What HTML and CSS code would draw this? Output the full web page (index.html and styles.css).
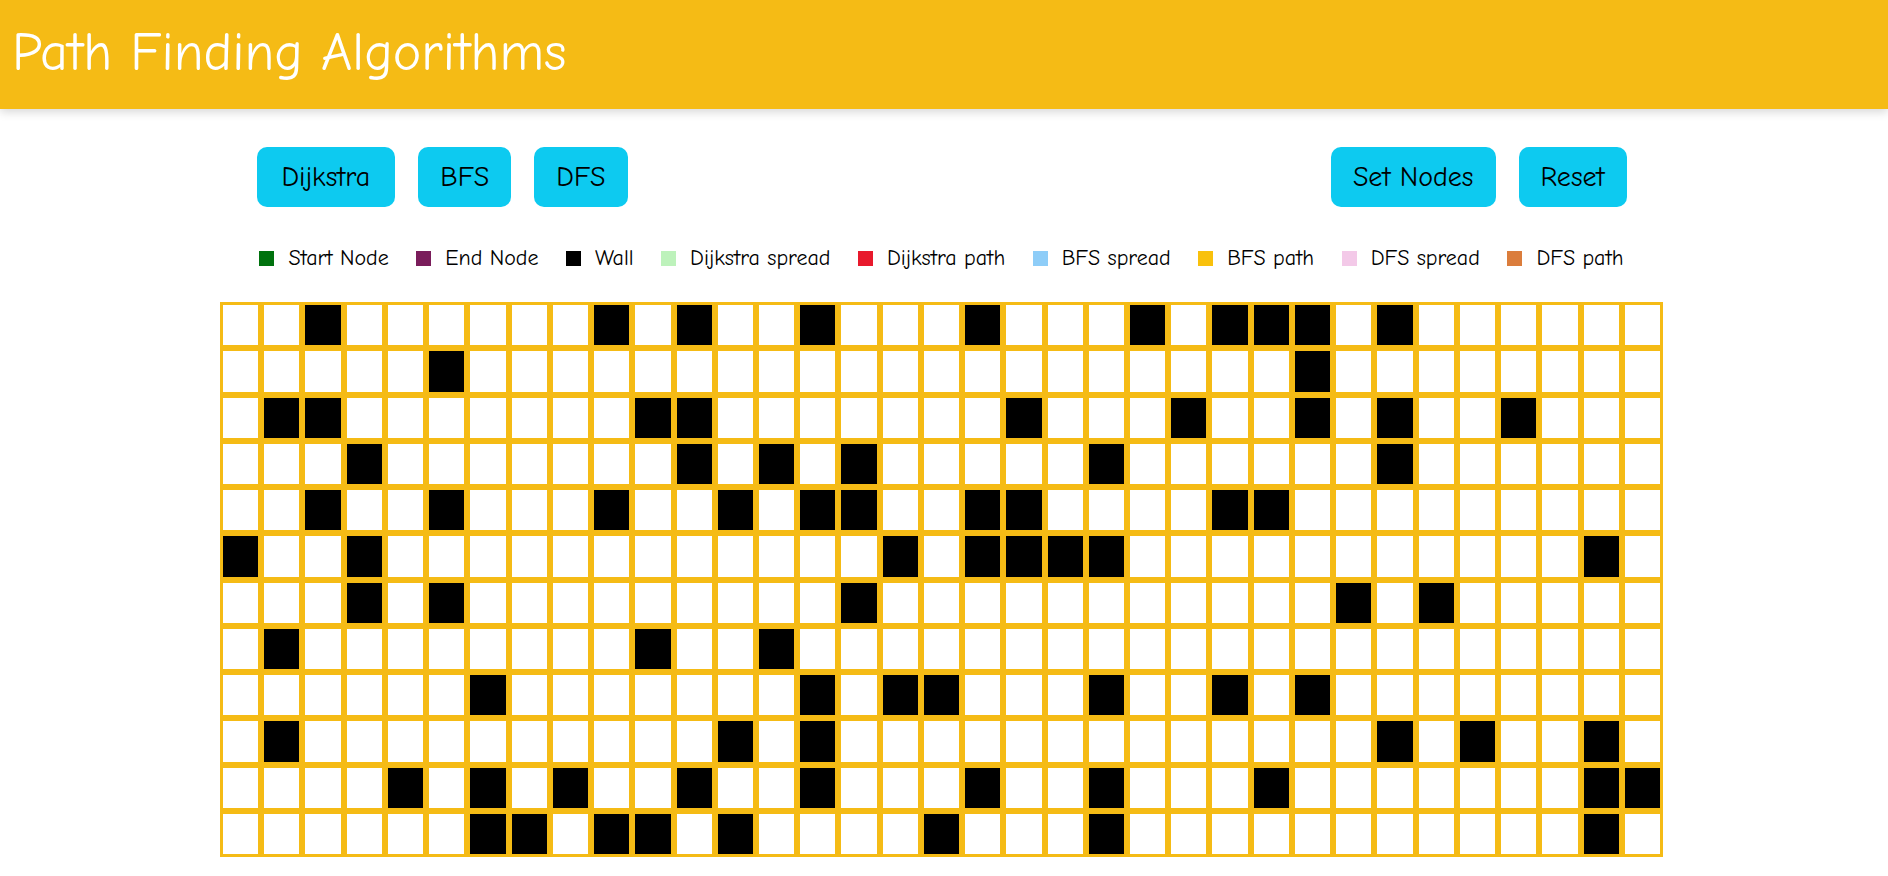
FILE: index.html
```html
<!DOCTYPE html>
<html lang="en">
<head>
<meta charset="utf-8">
<title>Path Finding Algorithms</title>
<link rel="stylesheet" href="styles.css">
</head>
<body>
<header class="topbar">
  <h1 class="title">Path Finding Algorithms</h1>
</header>
<main class="main">
  <div class="toolbar">
    <div class="btn-group">
      <button class="btn btn-wide">Dijkstra</button>
      <button class="btn">BFS</button>
      <button class="btn">DFS</button>
    </div>
    <div class="btn-group">
      <button class="btn">Set Nodes</button>
      <button class="btn">Reset</button>
    </div>
  </div>
  <ul class="legend">
    <li class="legend-item"><span class="swatch start"></span>Start Node</li>
    <li class="legend-item"><span class="swatch end"></span>End Node</li>
    <li class="legend-item"><span class="swatch wallc"></span>Wall</li>
    <li class="legend-item"><span class="swatch dspread"></span>Dijkstra spread</li>
    <li class="legend-item"><span class="swatch dpath"></span>Dijkstra path</li>
    <li class="legend-item"><span class="swatch bspread"></span>BFS spread</li>
    <li class="legend-item"><span class="swatch bpath"></span>BFS path</li>
    <li class="legend-item"><span class="swatch fspread"></span>DFS spread</li>
    <li class="legend-item"><span class="swatch fpath"></span>DFS path</li>
  </ul>
  <div class="grid">
    <div class="node"></div><div class="node"></div><div class="node wall"></div><div class="node"></div><div class="node"></div><div class="node"></div><div class="node"></div><div class="node"></div><div class="node"></div><div class="node wall"></div><div class="node"></div><div class="node wall"></div><div class="node"></div><div class="node"></div><div class="node wall"></div><div class="node"></div><div class="node"></div><div class="node"></div><div class="node wall"></div><div class="node"></div><div class="node"></div><div class="node"></div><div class="node wall"></div><div class="node"></div><div class="node wall"></div><div class="node wall"></div><div class="node wall"></div><div class="node"></div><div class="node wall"></div><div class="node"></div><div class="node"></div><div class="node"></div><div class="node"></div><div class="node"></div><div class="node"></div>
    <div class="node"></div><div class="node"></div><div class="node"></div><div class="node"></div><div class="node"></div><div class="node wall"></div><div class="node"></div><div class="node"></div><div class="node"></div><div class="node"></div><div class="node"></div><div class="node"></div><div class="node"></div><div class="node"></div><div class="node"></div><div class="node"></div><div class="node"></div><div class="node"></div><div class="node"></div><div class="node"></div><div class="node"></div><div class="node"></div><div class="node"></div><div class="node"></div><div class="node"></div><div class="node"></div><div class="node wall"></div><div class="node"></div><div class="node"></div><div class="node"></div><div class="node"></div><div class="node"></div><div class="node"></div><div class="node"></div><div class="node"></div>
    <div class="node"></div><div class="node wall"></div><div class="node wall"></div><div class="node"></div><div class="node"></div><div class="node"></div><div class="node"></div><div class="node"></div><div class="node"></div><div class="node"></div><div class="node wall"></div><div class="node wall"></div><div class="node"></div><div class="node"></div><div class="node"></div><div class="node"></div><div class="node"></div><div class="node"></div><div class="node"></div><div class="node wall"></div><div class="node"></div><div class="node"></div><div class="node"></div><div class="node wall"></div><div class="node"></div><div class="node"></div><div class="node wall"></div><div class="node"></div><div class="node wall"></div><div class="node"></div><div class="node"></div><div class="node wall"></div><div class="node"></div><div class="node"></div><div class="node"></div>
    <div class="node"></div><div class="node"></div><div class="node"></div><div class="node wall"></div><div class="node"></div><div class="node"></div><div class="node"></div><div class="node"></div><div class="node"></div><div class="node"></div><div class="node"></div><div class="node wall"></div><div class="node"></div><div class="node wall"></div><div class="node"></div><div class="node wall"></div><div class="node"></div><div class="node"></div><div class="node"></div><div class="node"></div><div class="node"></div><div class="node wall"></div><div class="node"></div><div class="node"></div><div class="node"></div><div class="node"></div><div class="node"></div><div class="node"></div><div class="node wall"></div><div class="node"></div><div class="node"></div><div class="node"></div><div class="node"></div><div class="node"></div><div class="node"></div>
    <div class="node"></div><div class="node"></div><div class="node wall"></div><div class="node"></div><div class="node"></div><div class="node wall"></div><div class="node"></div><div class="node"></div><div class="node"></div><div class="node wall"></div><div class="node"></div><div class="node"></div><div class="node wall"></div><div class="node"></div><div class="node wall"></div><div class="node wall"></div><div class="node"></div><div class="node"></div><div class="node wall"></div><div class="node wall"></div><div class="node"></div><div class="node"></div><div class="node"></div><div class="node"></div><div class="node wall"></div><div class="node wall"></div><div class="node"></div><div class="node"></div><div class="node"></div><div class="node"></div><div class="node"></div><div class="node"></div><div class="node"></div><div class="node"></div><div class="node"></div>
    <div class="node wall"></div><div class="node"></div><div class="node"></div><div class="node wall"></div><div class="node"></div><div class="node"></div><div class="node"></div><div class="node"></div><div class="node"></div><div class="node"></div><div class="node"></div><div class="node"></div><div class="node"></div><div class="node"></div><div class="node"></div><div class="node"></div><div class="node wall"></div><div class="node"></div><div class="node wall"></div><div class="node wall"></div><div class="node wall"></div><div class="node wall"></div><div class="node"></div><div class="node"></div><div class="node"></div><div class="node"></div><div class="node"></div><div class="node"></div><div class="node"></div><div class="node"></div><div class="node"></div><div class="node"></div><div class="node"></div><div class="node wall"></div><div class="node"></div>
    <div class="node"></div><div class="node"></div><div class="node"></div><div class="node wall"></div><div class="node"></div><div class="node wall"></div><div class="node"></div><div class="node"></div><div class="node"></div><div class="node"></div><div class="node"></div><div class="node"></div><div class="node"></div><div class="node"></div><div class="node"></div><div class="node wall"></div><div class="node"></div><div class="node"></div><div class="node"></div><div class="node"></div><div class="node"></div><div class="node"></div><div class="node"></div><div class="node"></div><div class="node"></div><div class="node"></div><div class="node"></div><div class="node wall"></div><div class="node"></div><div class="node wall"></div><div class="node"></div><div class="node"></div><div class="node"></div><div class="node"></div><div class="node"></div>
    <div class="node"></div><div class="node wall"></div><div class="node"></div><div class="node"></div><div class="node"></div><div class="node"></div><div class="node"></div><div class="node"></div><div class="node"></div><div class="node"></div><div class="node wall"></div><div class="node"></div><div class="node"></div><div class="node wall"></div><div class="node"></div><div class="node"></div><div class="node"></div><div class="node"></div><div class="node"></div><div class="node"></div><div class="node"></div><div class="node"></div><div class="node"></div><div class="node"></div><div class="node"></div><div class="node"></div><div class="node"></div><div class="node"></div><div class="node"></div><div class="node"></div><div class="node"></div><div class="node"></div><div class="node"></div><div class="node"></div><div class="node"></div>
    <div class="node"></div><div class="node"></div><div class="node"></div><div class="node"></div><div class="node"></div><div class="node"></div><div class="node wall"></div><div class="node"></div><div class="node"></div><div class="node"></div><div class="node"></div><div class="node"></div><div class="node"></div><div class="node"></div><div class="node wall"></div><div class="node"></div><div class="node wall"></div><div class="node wall"></div><div class="node"></div><div class="node"></div><div class="node"></div><div class="node wall"></div><div class="node"></div><div class="node"></div><div class="node wall"></div><div class="node"></div><div class="node wall"></div><div class="node"></div><div class="node"></div><div class="node"></div><div class="node"></div><div class="node"></div><div class="node"></div><div class="node"></div><div class="node"></div>
    <div class="node"></div><div class="node wall"></div><div class="node"></div><div class="node"></div><div class="node"></div><div class="node"></div><div class="node"></div><div class="node"></div><div class="node"></div><div class="node"></div><div class="node"></div><div class="node"></div><div class="node wall"></div><div class="node"></div><div class="node wall"></div><div class="node"></div><div class="node"></div><div class="node"></div><div class="node"></div><div class="node"></div><div class="node"></div><div class="node"></div><div class="node"></div><div class="node"></div><div class="node"></div><div class="node"></div><div class="node"></div><div class="node"></div><div class="node wall"></div><div class="node"></div><div class="node wall"></div><div class="node"></div><div class="node"></div><div class="node wall"></div><div class="node"></div>
    <div class="node"></div><div class="node"></div><div class="node"></div><div class="node"></div><div class="node wall"></div><div class="node"></div><div class="node wall"></div><div class="node"></div><div class="node wall"></div><div class="node"></div><div class="node"></div><div class="node wall"></div><div class="node"></div><div class="node"></div><div class="node wall"></div><div class="node"></div><div class="node"></div><div class="node"></div><div class="node wall"></div><div class="node"></div><div class="node"></div><div class="node wall"></div><div class="node"></div><div class="node"></div><div class="node"></div><div class="node wall"></div><div class="node"></div><div class="node"></div><div class="node"></div><div class="node"></div><div class="node"></div><div class="node"></div><div class="node"></div><div class="node wall"></div><div class="node wall"></div>
    <div class="node"></div><div class="node"></div><div class="node"></div><div class="node"></div><div class="node"></div><div class="node"></div><div class="node wall"></div><div class="node wall"></div><div class="node"></div><div class="node wall"></div><div class="node wall"></div><div class="node"></div><div class="node wall"></div><div class="node"></div><div class="node"></div><div class="node"></div><div class="node"></div><div class="node wall"></div><div class="node"></div><div class="node"></div><div class="node"></div><div class="node wall"></div><div class="node"></div><div class="node"></div><div class="node"></div><div class="node"></div><div class="node"></div><div class="node"></div><div class="node"></div><div class="node"></div><div class="node"></div><div class="node"></div><div class="node"></div><div class="node wall"></div><div class="node"></div>
  </div>
</main>
</body>
</html>
```

FILE: styles.css
```css
html, body {
  margin: 0;
  padding: 0;
  background: #ffffff;
}

body {
  font-family: "Comic Sans MS", "Comic Neue", "Open Sans", sans-serif;
  color: #000;
  overflow: hidden;
}

.topbar {
  height: 109px;
  background: #f5bb15;
  box-shadow: 0 3px 9px rgba(0, 0, 0, 0.16);
  display: flex;
  align-items: center;
  padding-left: 12px;
  box-sizing: border-box;
  position: relative;
}

.title {
  margin: 0 0 3px 0;
  font-size: 54px;
  font-weight: 400;
  color: #ffffff;
  line-height: 1;
}

.main {
  display: flex;
  flex-direction: column;
  align-items: center;
  padding-right: 5px;
}

.toolbar {
  width: 1370px;
  margin-top: 38px;
  display: flex;
  justify-content: space-between;
}

.btn-group {
  display: flex;
  gap: 23px;
}

.btn {
  height: 60px;
  padding: 0 22px;
  border: none;
  border-radius: 10px;
  background: #0dcaf0;
  color: #000;
  font-family: inherit;
  font-size: 28px;
  cursor: pointer;
}

.btn-wide {
  padding: 0 25px;
}

.legend {
  list-style: none;
  margin: 38px 0 0 0;
  padding: 0;
  display: flex;
  gap: 27.5px;
  height: 26px;
  align-items: center;
}

.legend-item {
  display: flex;
  align-items: center;
  gap: 14px;
  font-size: 22px;
  line-height: 26px;
}

.swatch {
  width: 15px;
  height: 15px;
  display: inline-block;
}

.start { background: #00720e; }
.end { background: #7a1d5b; }
.wallc { background: #000000; }
.dspread { background: #bdf2bb; }
.dpath { background: #e8192c; }
.bspread { background: #8ecdf8; }
.bpath { background: #f9c10c; }
.fspread { background: #f3c9e8; }
.fpath { background: #db7d3c; }

.grid {
  margin-top: 31px;
  width: 1443px;
  display: grid;
  grid-template-columns: repeat(35, 1fr);
  grid-template-rows: repeat(12, 46.25px);
}

.node {
  box-sizing: border-box;
  border: 3px solid #f5bb15;
  background: #ffffff;
}

.node.wall {
  background: #000000;
}
```
